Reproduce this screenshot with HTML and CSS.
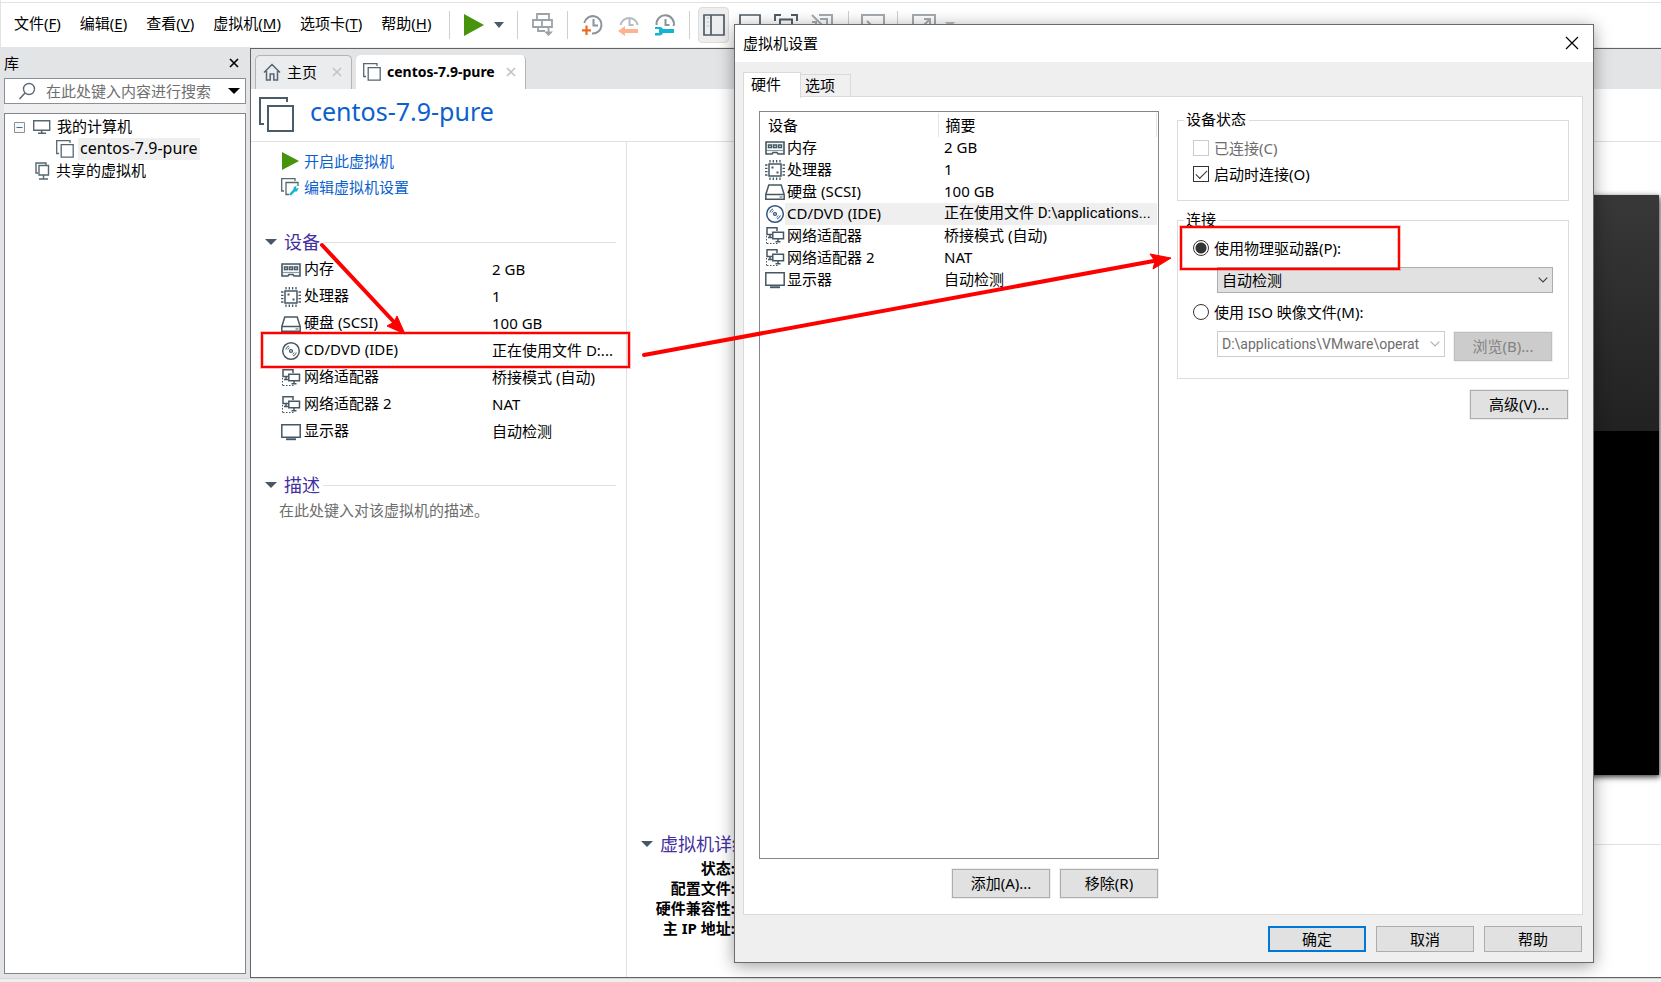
FILE: index.html
```html
<!DOCTYPE html>
<html lang="zh-CN">
<head>
<meta charset="utf-8">
<title>centos-7.9-pure</title>
<link rel="stylesheet" href="styles.css">
</head>
<body>
<svg class="sprite" aria-hidden="true">
  <symbol id="i-memory" viewBox="0 0 20 20">
    <path d="M1 4h18v12h-6l-1-1.500H8L7 16H1z" fill="#f2f5f6" stroke="#465865" stroke-width="1.600"/>
    <path d="M3.500 7h3v2.500h-3zM8.500 7h3v2.500h-3zM13.500 7h3v2.500h-3z" fill="none" stroke="#465865" stroke-width="1.400"/>
    <path d="M2 12.500h16" stroke="#8c9aa3"/>
  </symbol>
  <symbol id="i-cpu" viewBox="0 0 20 20">
    <path d="M4 4h12v12H4z" fill="none" stroke="#465865" stroke-width="1.500"/>
    <path d="M5 0v2.500M8.300 0v2.500M11.600 0v2.500M15 0v2.500M5 17.500V20M8.300 17.500V20M11.600 17.500V20M15 17.500V20M0 5h2.500M0 8.300h2.500M0 11.600h2.500M0 15h2.500M17.500 5H20M17.500 8.300H20M17.500 11.600H20M17.500 15H20" stroke="#465865" stroke-width="1.300"/>
    <path d="M6.500 6.500h2v2h-2zM11.500 11.500h2v2h-2z" fill="#465865"/>
  </symbol>
  <symbol id="i-disk" viewBox="0 0 20 20">
    <path d="M.8 12.500L3.800 3h12.400l3 9.500v4.700H.8zM.8 12.500h18.400" fill="none" stroke="#465865" stroke-width="1.500"/>
    <path d="M14.500 15h3" stroke="#465865"/>
  </symbol>
  <symbol id="i-disc" viewBox="0 0 20 20">
    <circle cx="10" cy="10" r="8.300" fill="none" stroke="currentColor" stroke-width="1.500"/>
    <circle cx="10" cy="10" r="2.100" fill="currentColor"/><circle cx="10" cy="10" r=".8" fill="#fff"/>
    <path d="M4.700 8.500A5.500 5.500 0 0 1 8 4.900M6.800 8.500A3.700 3.700 0 0 1 8.500 6.700M15.300 11.500A5.500 5.500 0 0 1 12 15.100M13.200 11.500A3.700 3.700 0 0 1 11.500 13.300" fill="none" stroke="currentColor"/>
  </symbol>
  <symbol id="i-net" viewBox="0 0 20 20">
    <path d="M7 8.500H2V1.700h10V5" fill="none" stroke="#465865" stroke-width="1.500"/>
    <path d="M7.800 6.300h10.700v6.400H7.800zM13 13v2.500M10.500 15.700h5M5 9v2.500M3 11.500h4" fill="none" stroke="#465865" stroke-width="1.500"/>
    <path d="M1.500 10v8M2 17.500h11" fill="none" stroke="#465865" stroke-dasharray="1.500 1.500"/>
  </symbol>
  <symbol id="i-display" viewBox="0 0 20 20">
    <path d="M.8 2.800h18.400v12.400H.8z" fill="none" stroke="#465865" stroke-width="1.500"/>
    <path d="M5 16.300h10v1.900H5z" fill="#465865"/>
  </symbol>
  <symbol id="i-vm" viewBox="0 0 18 18">
    <path d="M3 13.500H.7V.7H14V3M5.200 4.700h12v12.500h-12z" fill="none" stroke="#566773" stroke-width="1.300"/>
  </symbol>
  <symbol id="i-monitor" viewBox="0 0 20 16">
    <path d="M1.700 1.700h16v9.600h-16z" fill="none" stroke="#566773" stroke-width="1.400"/>
    <path d="M9.700 11v2.500M6 14.200h8" stroke="#566773" stroke-width="1.600"/>
  </symbol>
  <symbol id="i-x" viewBox="0 0 10 10"><path d="M1 1l8 8M9 1L1 9" fill="none" stroke="currentColor" stroke-width="1.600"/></symbol>
  <symbol id="i-chev" viewBox="0 0 10 6"><path d="M.7.7L5 5 9.300.7" fill="none" stroke="currentColor" stroke-width="1.200"/></symbol>
  <symbol id="i-caret" viewBox="0 0 12 6"><path d="M0 0h12L6 6z" fill="currentColor"/></symbol>
  <symbol id="i-clock" viewBox="0 0 24 24">
    <path d="M3.300 10A8.700 8.700 0 1 1 11 20.500M12.500 6v6.500h4.500" fill="none" stroke="currentColor" stroke-width="2"/>
  </symbol>
</svg>

<div class="app">
  <header class="bar">
    <nav class="menu">
      <button>文件(<u>F</u>)</button><button>编辑(<u>E</u>)</button><button>查看(<u>V</u>)</button><button>虚拟机(<u>M</u>)</button><button>选项卡(<u>T</u>)</button><button>帮助(<u>H</u>)</button>
    </nav>
    <div class="tools">
      <i class="sep"></i>
      <button class="tool power" aria-label="开启"><svg width="20" height="22" viewBox="0 0 20 22"><path d="M0 0l20 11L0 22z" fill="#46930d"/></svg><svg class="slate" width="10" height="6" viewBox="0 0 10 6"><path d="M0 0h10L5 6z" fill="currentColor"/></svg></button>
      <i class="sep"></i>
      <button class="tool keys" aria-label="发送按键"><svg width="22" height="24" viewBox="0 0 22 24"><path d="M5 1h12v6H5zM1 7h9v7H1zM10 7h10v7H10zM6 14v4h7M16.500 15v7" fill="none" stroke="#9aa3aa" stroke-width="1.800"/><path d="M12 18.500h9L16.500 23z" fill="#9aa3aa"/></svg></button>
      <i class="sep"></i>
      <div class="clocks">
        <button class="tool" aria-label="拍摄快照"><svg class="gray" width="24" height="24" viewBox="0 0 24 24"><use href="#i-clock"/><path d="M5.500 12.500v9.500M1 17.300h9" stroke="#ee6a22" stroke-width="2.200"/></svg></button>
        <button class="tool" aria-label="恢复快照"><svg class="pale" width="24" height="24" viewBox="0 0 24 24"><path d="M3.600 12A8.700 8.700 0 0 1 20.700 12M12.500 6v6h4" fill="none" stroke="currentColor" stroke-width="2"/><path d="M1 18l7-5v3h13v4H8v3z" fill="#fdb38d"/></svg></button>
        <button class="tool" aria-label="管理快照"><svg class="gray" width="24" height="24" viewBox="0 0 24 24"><path d="M3.600 12A8.700 8.700 0 1 1 20.700 13M12.500 6v6h4" fill="none" stroke="currentColor" stroke-width="2"/><path d="M2 14h5a4 4 0 0 1 3 2h11v4H10a4 4 0 0 1-3 2.500H2v-2.500h4v-4H2z" fill="#14b4d4"/></svg></button>
      </div>
      <i class="sep"></i>
      <div class="views">
        <button class="tool on" aria-label="库"><svg width="22" height="22" viewBox="0 0 22 22"><path d="M1 1h20v20H1zM8 1v20" fill="none" stroke="#4b5c69" stroke-width="1.700"/><path d="M3.500 4h2.500M3.500 8h2.500M3.500 12h2.500" stroke="#b9c1c6"/></svg></button>
        <button class="tool" aria-label="缩略图"><svg width="22" height="22" viewBox="0 0 22 22"><path d="M1 1h20v20H1z" fill="none" stroke="#4b5c69" stroke-width="1.700"/></svg></button>
        <button class="tool" aria-label="全屏"><svg width="24" height="22" viewBox="0 0 24 22"><path d="M1 7V1h6M17 1h6v6M6 5.500h12v10H6z" fill="none" stroke="#4b5c69" stroke-width="1.900"/></svg></button>
        <button class="tool" aria-label="统一"><svg width="22" height="22" viewBox="0 0 22 22"><path d="M8 1h13v20M1 1l12 12M1 8h4v8M9 5h7v8" fill="none" stroke="#a4acb2" stroke-width="2"/></svg></button>
      </div>
      <i class="sep"></i>
      <button class="tool" aria-label="控制台"><svg width="24" height="22" viewBox="0 0 24 22"><path d="M1 1h22v20H1zM6 7l5 5" fill="none" stroke="#a4acb2" stroke-width="2"/></svg></button>
      <i class="sep"></i>
      <button class="tool stretch" aria-label="拉伸"><svg width="24" height="22" viewBox="0 0 24 22"><path d="M1 1h22v20H1zM12 5h6v6M18 5l-7 7" fill="none" stroke="#a4acb2" stroke-width="2"/></svg><svg class="pale" width="10" height="6" viewBox="0 0 10 6"><path d="M0 0h10L5 6z" fill="currentColor"/></svg></button>
    </div>
  </header>

  <aside class="side">
    <div class="side-head"><span>库</span><button class="bare" aria-label="关闭库"><svg width="10" height="10"><use href="#i-x"/></svg></button></div>
    <label class="search">
      <svg width="18" height="18" viewBox="0 0 18 18"><circle cx="11" cy="7" r="5.500" fill="none" stroke="#5f6a78" stroke-width="1.400"/><path d="M7 11l-5.500 6" stroke="#5f6a78" stroke-width="1.600"/></svg>
      <input type="text" aria-label="搜索" placeholder="在此处键入内容进行搜索">
      <svg width="12" height="6"><use href="#i-caret"/></svg>
    </label>
    <div class="gap"></div>
    <ul class="tree">
      <li class="lv1"><svg width="11" height="11" viewBox="0 0 11 11"><path d="M.5.5h10v10H.5z" fill="#f8f8f8" stroke="#8f8f8f"/><path d="M2.500 5.500h6" stroke="#3f6aa8"/></svg><svg width="20" height="16"><use href="#i-monitor"/></svg><span>我的计算机</span></li>
      <li class="lv2"><svg width="18" height="18"><use href="#i-vm"/></svg><span class="picked">centos-7.9-pure</span></li>
      <li class="lv3"><svg width="15" height="18" viewBox="0 0 15 18"><path d="M3 11H1V1h10v2M4 3.500h9.500V13H4zM8.500 13v3.500M4 17h9" fill="none" stroke="#566773" stroke-width="1.400"/></svg><span>共享的虚拟机</span></li>
    </ul>
  </aside>

  <main class="main">
    <div class="tabs">
      <div class="tab"><svg width="18" height="18" viewBox="0 0 18 18"><path d="M1 9.500L9 1.500l8 8M3.500 8v9h3.700v-6h3.600v6h3.700V8" fill="none" stroke="#566773" stroke-width="1.500"/></svg><span>主页</span><button class="bare" aria-label="关闭主页"><svg width="10" height="10"><use href="#i-x"/></svg></button></div>
      <div class="tab active"><svg width="18" height="18"><use href="#i-vm"/></svg><span>centos-7.9-pure</span><button class="bare" aria-label="关闭标签"><svg width="10" height="10"><use href="#i-x"/></svg></button></div>
    </div>
    <div class="title"><svg width="36" height="36" viewBox="0 0 36 36"><path d="M5 27H1V1h27v4M9 9h25v25H9z" fill="none" stroke="#4b5c69" stroke-width="2"/></svg><h1>centos-7.9-pure</h1></div>
    <div class="cols">
      <section class="left">
        <div class="links">
          <a href="#"><svg width="18" height="18" viewBox="0 0 18 18"><path d="M1 0l17 9-17 9z" fill="#46930d"/></svg>开启此虚拟机</a>
          <a href="#"><svg width="18" height="18" viewBox="0 0 18 18"><path d="M3 13H.7V.7H14V3M8 16.500H5V4.500h12V8" fill="none" stroke="#566773" stroke-width="1.300"/><path d="M9 17l5-5.500" stroke="#14b4d4" stroke-width="2.600"/><path d="M12.500 9.500l3-2-.5 3 2.800-.5-2 3.500h-3z" fill="#14b4d4"/></svg>编辑虚拟机设置</a>
        </div>
        <h2><svg width="12" height="6"><use href="#i-caret"/></svg><span>设备</span></h2>
        <table class="devices">
          <tr><td><svg><use href="#i-memory"/></svg>内存</td><td>2 GB</td></tr>
          <tr><td><svg><use href="#i-cpu"/></svg>处理器</td><td>1</td></tr>
          <tr><td><svg><use href="#i-disk"/></svg>硬盘 (SCSI)</td><td>100 GB</td></tr>
          <tr><td><svg><use href="#i-disc"/></svg>CD/DVD (IDE)</td><td>正在使用文件 D:...</td></tr>
          <tr><td><svg><use href="#i-net"/></svg>网络适配器</td><td>桥接模式 (自动)</td></tr>
          <tr><td><svg><use href="#i-net"/></svg>网络适配器 2</td><td>NAT</td></tr>
          <tr><td><svg><use href="#i-display"/></svg>显示器</td><td>自动检测</td></tr>
        </table>
        <h2><svg width="12" height="6"><use href="#i-caret"/></svg><span>描述</span></h2>
        <p class="hint">在此处键入对该虚拟机的描述。</p>
      </section>
      <section class="right">
        <div class="screen"></div>
        <h2><svg width="12" height="6"><use href="#i-caret"/></svg><span>虚拟机详细信息</span></h2>
        <dl class="facts"><dt>状态:</dt><dt>配置文件:</dt><dt>硬件兼容性:</dt><dt>主 IP 地址:</dt></dl>
      </section>
    </div>
  </main>
  <footer class="status"></footer>
</div>

<div class="dialog" role="dialog" aria-label="虚拟机设置">
  <div class="dlg-title"><span>虚拟机设置</span><button class="bare" aria-label="关闭"><svg width="14" height="14" viewBox="0 0 14 14"><path d="M1 1l12 12M13 1L1 13" stroke="#000" stroke-width="1.200"/></svg></button></div>
  <div class="dlg-tabs"><button class="current">硬件</button><button>选项</button></div>
  <div class="pane">
    <div class="pane-left">
      <div class="list">
        <table>
          <thead><tr><th>设备</th><th>摘要</th></tr></thead>
          <tbody>
            <tr><td><div class="dev"><svg><use href="#i-memory"/></svg><span>内存</span></div></td><td>2 GB</td></tr>
            <tr><td><div class="dev"><svg><use href="#i-cpu"/></svg><span>处理器</span></div></td><td>1</td></tr>
            <tr><td><div class="dev"><svg><use href="#i-disk"/></svg><span>硬盘 (SCSI)</span></div></td><td>100 GB</td></tr>
            <tr class="sel"><td><div class="dev"><svg><use href="#i-disc"/></svg><span>CD/DVD (IDE)</span></div></td><td class="path">正在使用文件 D:\applications...</td></tr>
            <tr><td><div class="dev"><svg><use href="#i-net"/></svg><span>网络适配器</span></div></td><td>桥接模式 (自动)</td></tr>
            <tr><td><div class="dev"><svg><use href="#i-net"/></svg><span>网络适配器 2</span></div></td><td>NAT</td></tr>
            <tr><td><div class="dev"><svg><use href="#i-display"/></svg><span>显示器</span></div></td><td>自动检测</td></tr>
          </tbody>
        </table>
      </div>
      <div class="row-end"><button class="btn tall">添加(A)...</button><button class="btn tall">移除(R)</button></div>
    </div>
    <div class="pane-right">
      <fieldset class="state">
        <legend>设备状态</legend>
        <label class="opt off"><input type="checkbox" disabled>已连接(C)</label>
        <label class="opt"><input type="checkbox" checked>启动时连接(O)</label>
      </fieldset>
      <fieldset class="conn">
        <legend>连接</legend>
        <label class="opt"><input type="radio" name="src" checked>使用物理驱动器(P):</label>
        <div class="pick full"><select aria-label="物理驱动器"><option>自动检测</option></select><svg width="10" height="6"><use href="#i-chev"/></svg></div>
        <label class="opt"><input type="radio" name="src">使用 ISO 映像文件(M):</label>
        <div class="iso">
          <div class="pick off"><select aria-label="ISO 映像文件" class="path" disabled><option>D:\applications\VMware\operat</option></select><svg width="10" height="6"><use href="#i-chev"/></svg></div>
          <button class="btn tall" disabled>浏览(B)...</button>
        </div>
      </fieldset>
      <div class="row-end"><button class="btn tall">高级(V)...</button></div>
    </div>
  </div>
  <div class="dlg-foot"><button class="btn default">确定</button><button class="btn">取消</button><button class="btn">帮助</button></div>
</div>

<svg class="marks" width="1661" height="982" aria-hidden="true">
  <g fill="none" stroke="#fe0000">
    <path d="M262 333h367v34H262zM1181 227h218v42h-218z" stroke-width="2"/>
    <path d="M262 333h367v34H262zM1181 227h218v42h-218z" stroke-width="4" stroke-opacity=".25"/>
    <path d="M322 245l72 77M644 355l515-95" stroke-width="4" stroke-linecap="round"/>
  </g>
  <path d="M405 334l-18-8 7-4 3-6zM1171 258l-18 11 2-8-5-7z" fill="#fe0000" stroke="#fe0000"/>
</svg>
</body>
</html>
```
FILE: styles.css
```css
* { box-sizing: border-box; }
body {
  margin: 0;
  background: #efefef;
  color: #000;
  font: 15px/22px "Noto Sans", "Noto Sans CJK SC", sans-serif;
}
button, input, select { font: inherit; color: inherit; }
svg { flex: none; display: block; }
h1, h2, p, ul, dl { margin: 0; padding: 0; font-weight: 400; }
ul { list-style: none; }
.sprite { position: absolute; width: 0; height: 0; }

.app {
  display: grid;
  grid-template: 47px 1fr 4px / 250px 1fr;
  min-height: 100vh;
}

/* menu and toolbar */
.bar {
  grid-column: 1 / -1;
  display: flex;
  align-items: center;
  background: #fff;
  border: 0 solid #e3e3e3;
  border-left-width: 1px;
  box-shadow: inset 0 2px #fff, inset 0 3px #e3e3e3;
}
.menu { display: flex; gap: 19px; padding: 0 0 2px 13px; width: 448px; white-space: nowrap; }
.menu button, .tool, .bare { border: 0; padding: 0; background: none; }
.menu u { text-underline-offset: 2px; }
.tools { display: flex; align-items: center; padding-top: 2px; }
.sep { width: 1px; height: 28px; background: #cfcfcf; }
.tool { display: flex; align-items: center; justify-content: center; }
.power { width: 67px; gap: 10px; }
.keys { width: 49px; }
.clocks { display: flex; gap: 12px; padding: 0 15px 0 13px; width: 121px; }
.views { display: flex; align-items: center; gap: 5px; padding: 0 10px 0 8px; width: 158px; }
.views .tool { width: 31px; height: 36px; }
.views .on { background: #eee; border: 1px solid #dcdcdc; border-radius: 4px; }
.sep + .tool:not(.power, .keys, .stretch) { width: 48px; }
.stretch { gap: 9px; padding-left: 14px; }
.slate { color: #4b5c69; }
.gray { color: #8a949b; }
.pale { color: #b5bbc0; }

/* library */
.side {
  display: flex;
  flex-direction: column;
  padding: 0 4px 4px;
  background: #e3e4e6;
}
.side-head { display: flex; align-items: center; justify-content: space-between; height: 31px; padding-right: 7px; }
.search {
  display: flex;
  align-items: center;
  gap: 10px;
  height: 26px;
  padding: 0 5px 0 13px;
  border: 1px solid #8c9096;
  background: #fff;
}
.search input { flex: 1; min-width: 0; border: 0; padding: 0; height: 22px; outline: 0; background: none; }
.search input::placeholder { color: #6f6f6f; }
.gap { height: 9px; background: #efefef; }
.tree { flex: 1; padding: 2px 9px; border: 1px solid #82868c; background: #fff; }
.tree li { display: flex; align-items: center; height: 22px; }
.tree span { line-height: 20px; padding-bottom: 2px; }
.lv1 svg + svg { margin: 0 5px 0 7px; }
.lv2 { padding-left: 42px; gap: 4px; font-size: 16px; }
.lv3 { padding-left: 21px; gap: 6px; }
.tree .picked { background: #efefef; padding: 0 2px 2px; }

/* machine page */
.main {
  display: flex;
  flex-direction: column;
  margin-top: 1px;
  border: 1px solid #636363;
  border-right: 0;
  background: #fff;
}
.tabs { display: flex; gap: 4px; height: 40px; padding: 6px 4px 0; background: #e3e4e6; }
.tab {
  display: flex;
  align-items: center;
  width: 97px;
  padding: 0 9px 2px 7px;
  border: 1px solid #b4b4b4;
  border-bottom: 0;
  border-radius: 5px 5px 0 0;
  background: #ebecee;
  color: #000;
}
.tab span { flex: 1; padding-left: 6px; }
.tab .bare { color: #c2c4c6; }
.tab.active { width: 170px; padding-left: 6px; border-left-color: #fff; border-top-color: #fff; background: #fff; font-size: 14px; font-weight: 700; }
.title { display: flex; align-items: center; gap: 15px; height: 53px; padding: 0 8px; border-bottom: 1px solid #e1e1e1; }
.title h1 { color: #0a61ce; font-size: 25px; line-height: 34px; padding-bottom: 8px; }
.cols { flex: 1; display: grid; grid-template-columns: 376px 1fr; }
.left { padding: 6px 10px 0 14px; border-right: 1px solid #e1e1e1; }
.links { display: flex; flex-direction: column; padding: 0 0 29px 16px; }
.links a { display: flex; align-items: center; gap: 5px; height: 26px; color: #0a61ce; text-decoration: none; }
h2 { display: flex; align-items: center; gap: 7px; height: 26px; color: #42309f; font-size: 18px; }
h2 svg { color: #465865; }
h2::after { content: ""; flex: 1; height: 1px; margin-left: -4px; background: #e1e1e1; }
.devices { border-collapse: collapse; table-layout: fixed; width: 100%; margin: 1px 0 27px; }
.devices td { height: 27px; padding: 0 0 2px; white-space: nowrap; }
.devices td:first-child { width: 227px; padding-left: 16px; }
.devices svg { display: inline-block; width: 20px; height: 20px; margin-right: 3px; vertical-align: middle; color: #465865; }
.hint { padding: 1px 0 0 14px; color: #6d6d6d; }
.right { display: flex; flex-direction: column; padding: 53px 0 39px 14px; }
.screen {
  flex: 1;
  margin: 0 2px 56px 106px;
  background: linear-gradient(185deg, #383838, #1a1a1a) 0 0 / 100% 236px no-repeat #000;
  box-shadow: 1px 2px 6px #333;
}
.facts { width: 94px; padding-top: 1px; font-weight: 700; line-height: 20px; text-align: right; white-space: nowrap; }
.status { grid-column: 1 / -1; border-top: 1px solid #d6d6d6; }

/* settings window */
.dialog {
  position: absolute;
  inset: 24px 67px 19px 734px;
  display: flex;
  flex-direction: column;
  border: 1px solid #6b6b6b;
  background: #efefef;
  box-shadow: 0 3px 16px rgba(0, 0, 0, .38);
}
.dlg-title { display: flex; align-items: center; justify-content: space-between; height: 37px; padding: 0 14px 2px 8px; background: #fff; }
.dlg-tabs { display: flex; align-items: flex-end; height: 35px; padding: 9px 8px 0; }
.dlg-tabs button { width: 50px; height: 23px; padding: 0 0 2px 4px; border: 1px solid #dadada; border-left: 0; background: #f0f0f0; line-height: 20px; text-align: left; }
.dlg-tabs .current { z-index: 1; width: 58px; height: 26px; margin-bottom: -1px; padding: 0 0 4px 7px; border-left: 1px solid #dadada; border-bottom: 0; background: #fff; }
.pane {
  flex: 1;
  display: grid;
  grid-template-columns: 400fr 392fr;
  gap: 18px;
  margin: -1px 10px 0 8px;
  padding: 12px 13px 16px 15px;
  border: 1px solid #dadada;
  background: #fff;
}
.pane-left { display: flex; flex-direction: column; padding-top: 2px; }
.list { flex: 1; padding: 1px; border: 1px solid #828790; }
.list table { width: 100%; table-layout: fixed; border-collapse: collapse; }
.list th { height: 24px; padding: 0 6px 0 7px; border-right: 1px solid #e5e5e5; font-weight: 400; line-height: 20px; text-align: left; }
.list th:first-child { width: 177px; }
.list td { height: 22px; padding: 0 0 2px 6px; line-height: 20px; white-space: nowrap; }
.list td:first-child { padding: 0 0 0 4px; }
.dev { display: flex; align-items: center; height: 22px; }
.dev svg { width: 20px; height: 20px; color: #465865; }
.dev span { flex: 1; padding: 0 0 2px 2px; line-height: 20px; }
.sel span, .sel td + td { background: #efefef; }
.sel .dev svg { color: #2f567c; }
.path { font-family: Roboto, "Noto Sans CJK SC", sans-serif; }
.row-end { display: flex; justify-content: flex-end; gap: 10px; padding: 10px 1px 0 0; }
.btn { width: 98px; height: 26px; padding: 0 0 1px; border: 1px solid #adadad; background: #e1e1e1; line-height: 22px; }
.btn.tall { height: 29px; padding-bottom: 2px; box-shadow: 0 0 0 1px #efefef; }
.btn.default { border: 2px solid #0078d7; line-height: 20px; }
.btn:disabled { border-color: #bfbfbf; background: #ccc; color: #838383; }
fieldset { margin: 0; padding: 0 15px; border: 1px solid #dcdcdc; min-width: 0; }
legend { margin-left: -9px; padding: 0 3px 2px 2px; line-height: 20px; }
.state { padding: 4px 15px 13px; }
.conn { margin-top: 8px; padding: 4px 15px 17px; }
.conn + .row-end { padding-top: 11px; }
.opt { display: flex; align-items: center; gap: 5px; height: 26px; }
.opt.off { color: #6d6d6d; }
.opt input { appearance: none; width: 16px; height: 16px; margin: 0; border: 1px solid #333; background: #fff; }
.opt input:disabled { border-color: #ccc; }
.opt input[type="radio"] { border-radius: 50%; }
.opt input[type="radio"]:checked { background: radial-gradient(circle, #333 5px, #fff 6px); }
.opt input[type="checkbox"]:checked::before {
  content: "";
  display: block;
  width: 10px;
  height: 5px;
  margin: 3px 2px;
  border: solid #333;
  border-width: 0 0 1px 1px;
  transform: rotate(-45deg);
}
.pick { display: grid; align-items: center; flex: 1; height: 26px; }
.pick > * { grid-area: 1 / 1; }
.pick.full { margin: 6px 0 6px 24px; }
.pick select { appearance: none; width: 100%; height: 26px; padding: 0 18px 0 4px; border: 1px solid #adadad; border-radius: 0; background: #e1e1e1; line-height: 22px; }
.pick svg { justify-self: end; margin-right: 5px; color: #444; pointer-events: none; }
.pick.off select { border-color: #ccc; background: #fff; color: #6d6d6d; font-size: 14px; opacity: 1; }
.pick.off svg { color: #b0b0b0; }
.iso { display: flex; gap: 9px; padding: 6px 1px 0 24px; }
.iso .btn { margin-top: 1px; }
.dlg-foot { display: flex; justify-content: flex-end; gap: 10px; padding: 11px 11px 10px 0; }

/* annotations */
.marks { position: absolute; top: 0; left: 0; pointer-events: none; }
```
